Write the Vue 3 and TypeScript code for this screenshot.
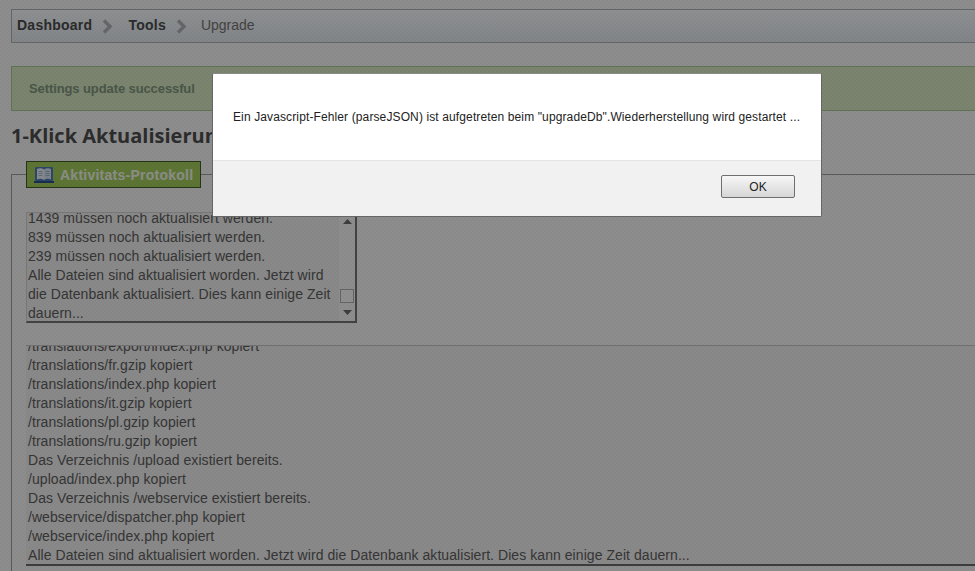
<script setup lang="ts">
const progressLines: string[] = [
  '1439 müssen noch aktualisiert werden.',
  '839 müssen noch aktualisiert werden.',
  '239 müssen noch aktualisiert werden.',
  'Alle Dateien sind aktualisiert worden. Jetzt wird die Datenbank aktualisiert. Dies kann einige Zeit dauern...',
]
const fileLines: string[] = [
  '/translations/export/index.php kopiert',
  '/translations/fr.gzip kopiert',
  '/translations/index.php kopiert',
  '/translations/it.gzip kopiert',
  '/translations/pl.gzip kopiert',
  '/translations/ru.gzip kopiert',
  'Das Verzeichnis /upload existiert bereits.',
  '/upload/index.php kopiert',
  'Das Verzeichnis /webservice existiert bereits.',
  '/webservice/dispatcher.php kopiert',
  '/webservice/index.php kopiert',
  'Alle Dateien sind aktualisiert worden. Jetzt wird die Datenbank aktualisiert. Dies kann einige Zeit dauern...',
]
</script>

<template>
  <div class="viewport">
    <div class="page">
      <nav class="crumbs">
        <b>Dashboard</b>
        <svg class="chev" width="11" height="15" viewBox="0 0 11 15"><path d="M2 1.500 8 7.500 2 13.500" fill="none" stroke="#a9abad" stroke-width="3.400" /></svg>
        <b>Tools</b>
        <svg class="chev" width="11" height="15" viewBox="0 0 11 15"><path d="M2 1.500 8 7.500 2 13.500" fill="none" stroke="#a9abad" stroke-width="3.400" /></svg>
        <span class="current">Upgrade</span>
      </nav>
      <div class="alert">Settings update successful</div>
      <h1>1-Klick Aktualisierung</h1>
      <fieldset class="panel">
        <legend>
          <svg width="20" height="18" viewBox="0 0 20 18">
            <rect x="1" y="1" width="18" height="14" rx="1" fill="#4a76b0" />
            <path d="M3 3c2-1 5-1 7 .5V14c-2-1.500-5-1.500-7-.5Z" fill="#dfe6ee" />
            <path d="M17 3c-2-1-5-1-7 .5V14c2-1.500 5-1.500 7-.5Z" fill="#cfd9e6" />
            <path d="M4.500 5.500h4M4.500 7.500h4M4.500 9.500h4M11.500 5.500h4M11.500 7.500h4M11.500 9.500h4" stroke="#8aa0c0" stroke-width=".8" />
            <rect x="0" y="15" width="20" height="2" fill="#2a4c85" />
          </svg>
          <span>Aktivitats-Protokoll</span>
        </legend>
        <div class="log short">
          <div class="log-text short-text">
            <div v-for="line in progressLines" :key="line">{{ line }}</div>
          </div>
          <div class="scrollbar">
            <svg class="arrow up" width="9" height="5" viewBox="0 0 9 5"><path d="M4.500 0 9 5H0Z" fill="#666" /></svg>
            <div class="thumb"></div>
            <svg class="arrow" width="9" height="5" viewBox="0 0 9 5"><path d="M0 0h9L4.500 5Z" fill="#666" /></svg>
          </div>
        </div>
        <div class="log long">
          <div class="log-text long-text">
            <div v-for="line in fileLines" :key="line">{{ line }}</div>
          </div>
        </div>
      </fieldset>
    </div>

    <div class="overlay"></div>

    <div class="dialog">
      <div class="dialog-body">Ein Javascript-Fehler (parseJSON) ist aufgetreten beim "upgradeDb".Wiederherstellung wird gestartet ...</div>
      <div class="dialog-foot">
        <button type="button">OK</button>
      </div>
    </div>
  </div>
</template>

<style>
html,
body {
  margin: 0;
  overflow: hidden;
}
</style>

<style scoped>
.viewport {
  position: relative;
  width: 975px;
  height: 571px;
  overflow: hidden;
  background: #ebebec;
  font-family: "Liberation Sans", Arial, sans-serif;
  color: #333;
}
.page {
  width: 1100px;
  padding: 9px 0 0 11px;
  box-sizing: border-box;
}
.crumbs {
  display: flex;
  align-items: center;
  height: 34px;
  box-sizing: border-box;
  padding: 0 0 2px 5px;
  border: 1px solid #a3adb0;
  background: linear-gradient(#eceff2, #d9dee3);
  font-size: 14px;
  color: #707070;
}
.crumbs b {
  color: #484848;
  letter-spacing: 0.25px;
}
.chev {
  margin: 2px 15px 0 10px;
}
.current {
  margin-left: -1px;
}
.alert {
  height: 45px;
  margin-top: 23px;
  box-sizing: border-box;
  border: 1px solid #a0c08c;
  background: #cbdcb9;
  padding: 14px 17px 0;
  font-size: 13px;
  line-height: 16px;
  font-weight: bold;
  color: #7c8f78;
  letter-spacing: -0.1px;
}
h1 {
  margin: 0;
  height: 50px;
  font-family: "Open Sans", sans-serif;
  font-size: 20px;
  line-height: 50px;
  font-weight: 700;
  color: #4a4a4a;
}
.panel {
  margin: 0;
  padding: 0 0 0 14px;
  height: 450px;
  border: 1px solid #969696;
  min-width: 0;
}
legend {
  display: flex;
  align-items: center;
  gap: 6px;
  width: 175px;
  height: 27px;
  box-sizing: border-box;
  padding: 0 0 0 7px;
  border: 1px solid #3f5a25;
  background: #9cc458;
  font-size: 14px;
  font-weight: bold;
  color: #e8ebe2;
  letter-spacing: 0.25px;
}
.log {
  position: relative;
  overflow: hidden;
  font-size: 14px;
  line-height: 19px;
  letter-spacing: 0.06px;
  color: #5a5a5a;
}
.short {
  width: 331px;
  height: 111px;
  margin-top: 24px;
  box-sizing: border-box;
  border-top: 1px solid #c8c8c8;
  border-left: 1px solid #c8c8c8;
  border-right: 2px solid #707070;
  border-bottom: 2px solid #707070;
  background: #e4e4e4;
}
.short-text {
  width: 310px;
  margin-top: -4px;
}
.log-text {
  padding-left: 1px;
}
.scrollbar {
  position: absolute;
  top: 0;
  right: 0;
  bottom: 0;
  width: 16px;
  display: flex;
  flex-direction: column;
  align-items: center;
  background: #ececec;
}
.arrow {
  flex: none;
  margin-bottom: 6px;
}
.arrow.up {
  margin: 6px 0 0;
}
.thumb {
  flex: none;
  width: 14px;
  height: 14px;
  margin-top: auto;
  margin-bottom: 7px;
  border: 1px solid #a8a8a8;
  box-sizing: border-box;
  background: #eeeeee;
}
.long {
  height: 221px;
  margin-top: 22px;
  box-sizing: border-box;
  border-top: 1px solid #bcbcbc;
  border-bottom: 2px solid #666;
  background: #e4e4e4;
}
.long-text {
  margin-top: -9px;
  padding-left: 2px;
}
.overlay {
  position: absolute;
  inset: 0;
  background-color: rgba(0, 0, 0, 0.4);
  background-image: conic-gradient(rgba(0, 0, 0, 0.025) 25%, transparent 0 50%, rgba(0, 0, 0, 0.025) 0 75%, transparent 0);
  background-size: 4px 4px;
}
.dialog {
  position: absolute;
  left: 212px;
  top: 73px;
  width: 610px;
  height: 144px;
  box-sizing: border-box;
  display: flex;
  flex-direction: column;
  border: 1px solid #666;
  border-top-color: #8a8a8a;
  border-radius: 2px;
  background: #fff;
  font-size: 12px;
  letter-spacing: 0.12px;
  color: #222;
}
.dialog-body {
  height: 86px;
  flex: none;
  padding: 36px 0 0 20px;
  box-sizing: border-box;
  line-height: 14px;
  white-space: nowrap;
}
.dialog-foot {
  flex: 1;
  display: flex;
  justify-content: flex-end;
  align-items: flex-start;
  padding: 14px 26px 0 0;
  border-top: 1px solid #e5e5e5;
  background: #f1f1f1;
}
button {
  width: 74px;
  height: 23px;
  padding: 0;
  border: 1px solid #6f6f6f;
  border-radius: 2px;
  background: linear-gradient(#f7f7f7, #d6d6d6);
  font-family: "Liberation Sans", Arial, sans-serif;
  font-size: 12px;
  color: #222;
}
</style>
